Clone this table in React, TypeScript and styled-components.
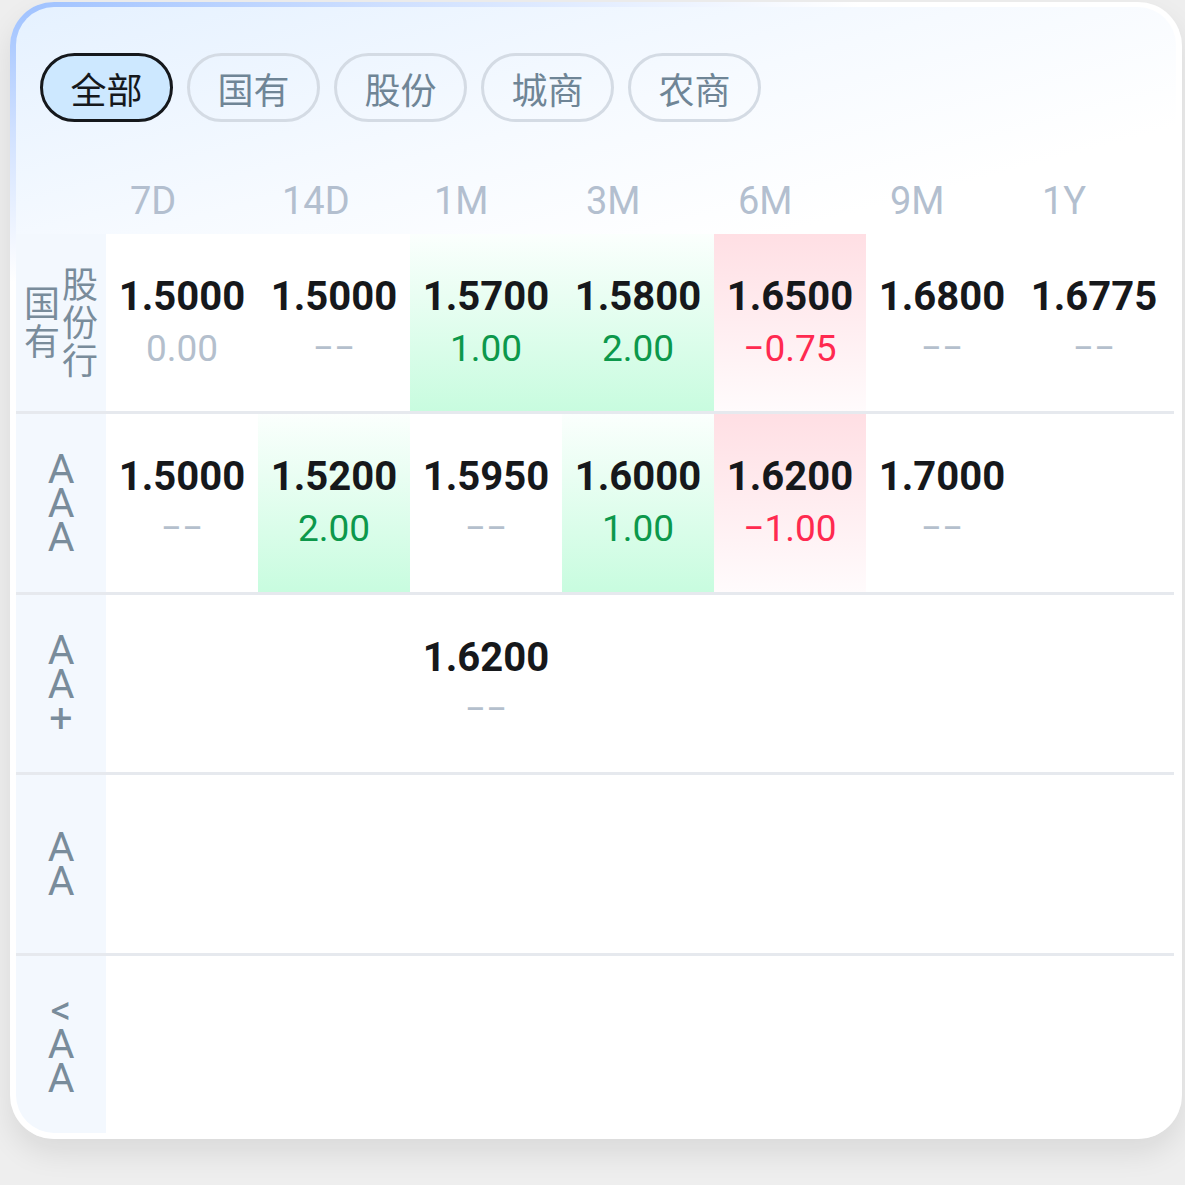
import React from 'react';
import styled, { createGlobalStyle } from 'styled-components';

const GlobalStyle = createGlobalStyle`
  html, body {
    margin: 0;
    padding: 0;
    background: #eeeeee;
  }
  body {
    font-family: Roboto, "Noto Sans CJK SC", sans-serif;
  }
`;

const Page = styled.div`
  padding: 2px 3px 40px 10px;
`;

const Card = styled.div`
  width: 1172px;
  height: 1137px;
  box-sizing: border-box;
  padding: 5px 6px 6px 6px;
  border-radius: 44px;
  background: radial-gradient(ellipse 850px 280px at 0 0, #9ec1ff 0%, #cfe0ff 45%, #ffffff 100%);
  box-shadow: 0 14px 30px rgba(0, 0, 0, 0.09);
`;

const Inner = styled.div`
  height: 100%;
  border-radius: 38px;
  overflow: hidden;
  display: flex;
  flex-direction: column;
  background: linear-gradient(165deg, #e5f1ff 0%, #f6faff 18%, #ffffff 30%);
`;

const ChipBar = styled.div`
  display: flex;
  gap: 14px;
  padding: 46px 0 0 24px;
`;

const Chip = styled.button<{ $active?: boolean }>`
  width: 133px;
  height: 69px;
  box-sizing: border-box;
  padding: 0;
  border-radius: 35px;
  border: 3px solid ${(p) => (p.$active ? '#15181c' : '#d4dbe4')};
  background: ${(p) => (p.$active ? '#cde8ff' : 'transparent')};
  color: ${(p) => (p.$active ? '#15181c' : '#6f8596')};
  font-family: "Noto Sans CJK SC", sans-serif;
  font-size: 36px;
  line-height: 1;
  display: flex;
  align-items: center;
  justify-content: center;
  cursor: pointer;
`;

const Grid = `
  display: grid;
  grid-template-columns: 90px repeat(7, 152px);
`;

const HeaderRow = styled.div`
  ${Grid}
  height: 66px;
  margin: 46px 2px 0 0;
  align-items: center;
`;

const HeadCell = styled.div`
  padding-left: 24px;
  font-family: Roboto, sans-serif;
  font-size: 38px;
  line-height: 1;
  color: #b3bfcf;
`;

const Body = styled.div`
  flex: 1;
  display: flex;
  flex-direction: column;
  margin-right: 2px;
`;

const Row = styled.div<{ $last?: boolean }>`
  ${Grid}
  flex: 1;
  background: #ffffff;
  border-bottom: ${(p) => (p.$last ? 'none' : '3px solid #e6e9ee')};
`;

const LabelCell = styled.div`
  background: #f3f8fe;
  display: flex;
  align-items: center;
  justify-content: center;
  color: #798c9b;
`;

const CjkLabel = styled.div`
  writing-mode: vertical-lr;
  font-family: "Noto Sans CJK SC", sans-serif;
  font-size: 36px;
  line-height: 38px;
  letter-spacing: 2px;
  text-align: center;
`;

const StackLabel = styled.div`
  display: flex;
  flex-direction: column;
  align-items: center;
  font-family: Roboto, sans-serif;
  font-size: 41px;
  line-height: 34px;
`;

type Tone = 'up' | 'down' | 'flat';

const toneBg: Record<Tone, string> = {
  up: 'linear-gradient(180deg, #fbfffd 0%, #c8fcdf 100%)',
  down: 'linear-gradient(180deg, #ffdfe4 0%, #fffbfc 100%)',
  flat: 'transparent',
};

const toneColor: Record<Tone, string> = {
  up: '#0c984b',
  down: '#ff2a50',
  flat: '#b4bfcd',
};

const Cell = styled.div<{ $tone?: Tone }>`
  display: flex;
  flex-direction: column;
  align-items: center;
  justify-content: center;
  gap: 4px;
  background: ${(p) => (p.$tone ? toneBg[p.$tone] : 'transparent')};
`;

const Price = styled.div`
  font-family: Roboto, sans-serif;
  font-weight: 700;
  font-size: 40px;
  line-height: 48px;
  color: #16181b;
`;

const Change = styled.div<{ $tone: Tone }>`
  font-family: Roboto, sans-serif;
  font-size: 37px;
  line-height: 48px;
  color: ${(p) => toneColor[p.$tone]};
`;

type Quote = { price: string; change?: string; tone?: Tone } | null;

type RowData = {
  label: string[];
  cjk?: boolean;
  cells: Quote[];
};

const tabs = ['全部', '国有', '股份', '城商', '农商'];
const terms = ['7D', '14D', '1M', '3M', '6M', '9M', '1Y'];

const rows: RowData[] = [
  {
    label: ['国有', '股份行'],
    cjk: true,
    cells: [
      { price: '1.5000', change: '0.00', tone: 'flat' },
      { price: '1.5000' },
      { price: '1.5700', change: '1.00', tone: 'up' },
      { price: '1.5800', change: '2.00', tone: 'up' },
      { price: '1.6500', change: '−0.75', tone: 'down' },
      { price: '1.6800' },
      { price: '1.6775' },
    ],
  },
  {
    label: ['AAA'],
    cells: [
      { price: '1.5000' },
      { price: '1.5200', change: '2.00', tone: 'up' },
      { price: '1.5950' },
      { price: '1.6000', change: '1.00', tone: 'up' },
      { price: '1.6200', change: '−1.00', tone: 'down' },
      { price: '1.7000' },
      null,
    ],
  },
  {
    label: ['AA+'],
    cells: [null, null, { price: '1.6200' }, null, null, null, null],
  },
  { label: ['AA'], cells: [null, null, null, null, null, null, null] },
  { label: ['<AA'], cells: [null, null, null, null, null, null, null] },
];

function RowLabel({ row }: { row: RowData }) {
  if (row.cjk) {
    return (
      <CjkLabel>
        {row.label.map((l, i) => (
          <React.Fragment key={i}>
            {i > 0 && <br />}
            {l}
          </React.Fragment>
        ))}
      </CjkLabel>
    );
  }
  return (
    <StackLabel>
      {row.label[0].split('').map((ch, i) => (
        <span key={i}>{ch}</span>
      ))}
    </StackLabel>
  );
}

function QuoteCell({ q }: { q: Quote }) {
  if (!q) return <Cell />;
  const tone: Tone = q.tone ?? 'flat';
  const bg = q.tone === 'up' || q.tone === 'down' ? q.tone : undefined;
  return (
    <Cell $tone={bg}>
      <Price>{q.price}</Price>
      <Change $tone={tone}>{q.change ?? '−−'}</Change>
    </Cell>
  );
}

export default function App() {
  return (
    <>
      <GlobalStyle />
      <Page>
        <Card>
          <Inner>
            <ChipBar>
              {tabs.map((t, i) => (
                <Chip key={t} $active={i === 0}>
                  {t}
                </Chip>
              ))}
            </ChipBar>
            <HeaderRow>
              <div />
              {terms.map((t) => (
                <HeadCell key={t}>{t}</HeadCell>
              ))}
            </HeaderRow>
            <Body>
              {rows.map((r, i) => (
                <Row key={i} $last={i === rows.length - 1}>
                  <LabelCell>
                    <RowLabel row={r} />
                  </LabelCell>
                  {r.cells.map((q, j) => (
                    <QuoteCell key={j} q={q} />
                  ))}
                </Row>
              ))}
            </Body>
          </Inner>
        </Card>
      </Page>
    </>
  );
}
